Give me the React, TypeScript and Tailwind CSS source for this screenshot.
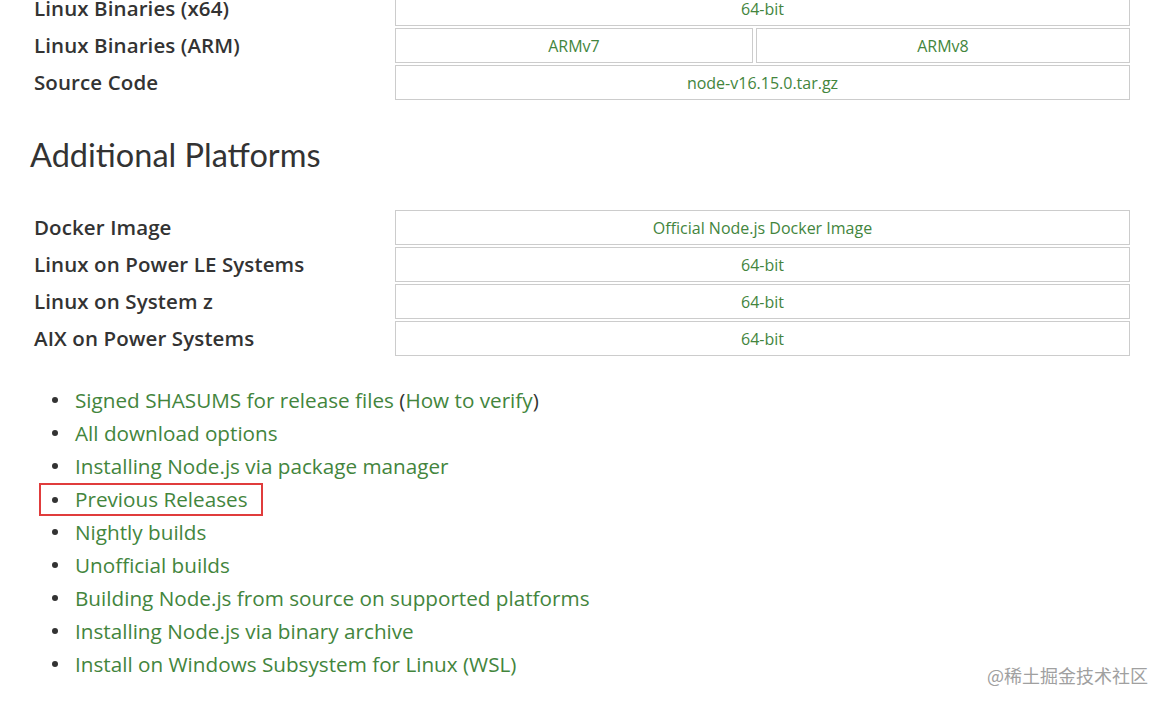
import React from "react";

const font = { fontFamily: "'Open Sans', Lato, sans-serif" };

function Cell({ children, w }: { children: React.ReactNode; w?: string }) {
  return (
    <div
      className={`${w ?? "flex-1"} h-[35px] border border-[#cccccc] flex items-center justify-center text-[16px] text-[#43853d]`}
    >
      {children}
    </div>
  );
}

function Row({ label, cells }: { label: string; cells: string[] }) {
  return (
    <div className="flex items-center">
      <div className="w-[365px] pl-1 text-[20.5px] font-semibold text-[#333333] tracking-[0.1px]">{label}</div>
      <div className="flex flex-1 gap-[3px]">
        {cells.map((c, i) => (
          <Cell key={c} w={cells.length > 1 && i === 0 ? "w-[358px]" : undefined}>
            {c}
          </Cell>
        ))}
      </div>
    </div>
  );
}

const links = [
  "Signed SHASUMS for release files",
  "All download options",
  "Installing Node.js via package manager",
  "Previous Releases",
  "Nightly builds",
  "Unofficial builds",
  "Building Node.js from source on supported platforms",
  "Installing Node.js via binary archive",
  "Install on Windows Subsystem for Linux (WSL)",
];

export default function App() {
  return (
    <div className="w-[1169px] h-[710px] bg-white overflow-hidden relative" style={font}>
      <div className="pl-[30px] pr-[39px] mt-[-9px]">
        <div className="flex flex-col gap-[2px]">
          <Row label="Linux Binaries (x64)" cells={["64-bit"]} />
          <Row label="Linux Binaries (ARM)" cells={["ARMv7", "ARMv8"]} />
          <Row label="Source Code" cells={["node-v16.15.0.tar.gz"]} />
        </div>
        <h2
          className="mt-[35px] text-[32.5px] font-normal text-[#333333] leading-[40px]"
          style={{ fontFamily: "Lato, sans-serif" }}
        >
          Additional Platforms
        </h2>
        <div className="mt-[35px] flex flex-col gap-[2px]">
          <Row label="Docker Image" cells={["Official Node.js Docker Image"]} />
          <Row label="Linux on Power LE Systems" cells={["64-bit"]} />
          <Row label="Linux on System z" cells={["64-bit"]} />
          <Row label="AIX on Power Systems" cells={["64-bit"]} />
        </div>
        <ul className="mt-[28px] pl-[22px]">
          {links.map((l, i) => (
            <li key={l} className="h-[33px] flex items-center text-[20.7px] text-[#43853d]">
              <div
                className={
                  i === 3
                    ? "flex items-center -ml-[13px] pl-[11px] pr-[13px] h-[33px] border-2 border-[#e03c3c]"
                    : "flex items-center"
                }
              >
                <span className="w-[6px] h-[6px] rounded-full bg-[#333333] mr-[17px]" />
                <span>
                  {l}
                  {i === 0 && (
                    <>
                      {" "}
                      <span className="text-[#333333]">(</span>How to verify<span className="text-[#333333]">)</span>
                    </>
                  )}
                </span>
              </div>
            </li>
          ))}
        </ul>
      </div>
      <div
        className="absolute right-[21px] bottom-[21px] text-[18px] text-[#a0a0a0]"
        style={{ fontFamily: "'Noto Sans CJK SC', sans-serif" }}
      >
        @稀土掘金技术社区
      </div>
    </div>
  );
}
